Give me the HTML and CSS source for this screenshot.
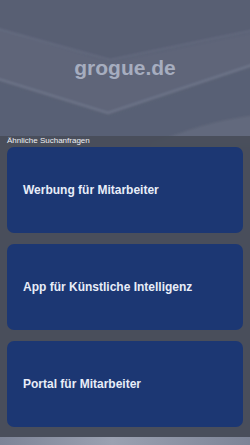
FILE: index.html
```html
<!DOCTYPE html>
<html lang="de">
<head>
<meta charset="utf-8">
<title>grogue.de</title>
<link rel="stylesheet" href="styles.css">
</head>
<body>
<div class="page">
  <svg class="bg" width="250" height="445" viewBox="0 0 250 445" preserveAspectRatio="none" aria-hidden="true">
    <defs>
      <linearGradient id="bot" x1="0" y1="0" x2="1" y2="0">
        <stop offset="0" stop-color="#7d8497"/>
        <stop offset="0.45" stop-color="#9ba1b1"/>
        <stop offset="1" stop-color="#7d8497"/>
      </linearGradient>
      <filter id="soft" x="-10%" y="-10%" width="120%" height="120%">
        <feGaussianBlur stdDeviation="1.2"/>
      </filter>
    </defs>
    <rect width="250" height="445" fill="#5a6175"/>
    <g filter="url(#soft)">
      <polygon points="-5,-5 255,-5 255,32 110,62 -5,28" fill="#585f73"/>
      <polygon points="-5,28 110,62 255,32 255,66 108,113 -5,78" fill="#5e6579"/>
      <polyline points="-5,28 110,60 255,30" fill="none" stroke="#676e82" stroke-width="1.5"/>
      <polyline points="-5,78 108,113 255,64" fill="none" stroke="#70778b" stroke-width="2"/>
      <polygon points="-5,80 108,115 255,66 255,145 -5,145" fill="#596074"/>
      <path d="M150,145 Q200,122 255,115 L255,145 Z" fill="#62697d"/>
    </g>
    <rect y="437" width="250" height="8" fill="url(#bot)"/>
  </svg>
  <header class="header">
    <h1 class="title">grogue.de</h1>
  </header>
  <section class="related">
    <div class="label">Ähnliche Suchanfragen</div>
    <a class="card" href="#">Werbung für Mitarbeiter</a>
    <a class="card" href="#">App für Künstliche Intelligenz</a>
    <a class="card" href="#">Portal für Mitarbeiter</a>
  </section>
</div>
</body>
</html>
```
FILE: styles.css
```css
html, body {
  margin: 0;
  padding: 0;
}
body {
  font-family: "Liberation Sans", Arial, sans-serif;
  width: 250px;
  height: 445px;
  overflow: hidden;
}
.page {
  position: relative;
  width: 250px;
  height: 445px;
}
.bg {
  position: absolute;
  left: 0;
  top: 0;
  z-index: 0;
}
.header {
  position: relative;
  z-index: 1;
  height: 136px;
  display: flex;
  align-items: center;
  justify-content: center;
}
.title {
  margin: 0;
  font-size: 21px;
  font-weight: bold;
  line-height: 24px;
  color: #a6adbf;
}
.related {
  position: relative;
  z-index: 1;
  background: rgba(72, 77, 89, 0.92);
  padding: 0 7px 10px;
  display: flex;
  flex-direction: column;
}
.label {
  font-size: 8px;
  line-height: 10px;
  padding-bottom: 1px;
  color: #eef0f4;
}
.card {
  display: flex;
  align-items: center;
  height: 86px;
  margin-bottom: 11px;
  padding-left: 16px;
  background: #1c3773;
  border-radius: 7px;
  color: #e8edf8;
  font-size: 12px;
  font-weight: bold;
  text-decoration: none;
}
.card:last-child {
  margin-bottom: 0;
}
```
